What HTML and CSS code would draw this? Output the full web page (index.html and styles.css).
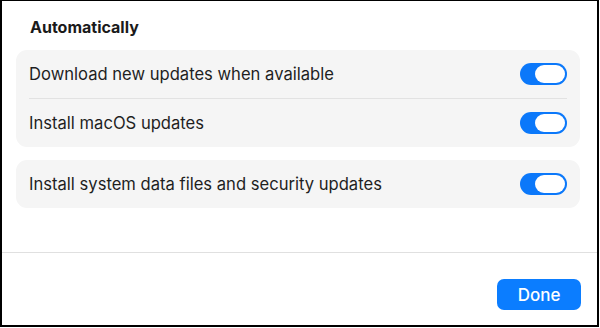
FILE: index.html
```html
<!DOCTYPE html>
<html lang="en">
<head>
<meta charset="utf-8">
<title>Automatic Updates</title>
<link rel="stylesheet" href="styles.css">
</head>
<body>
<div class="window">
  <div class="content">
    <h2 class="heading">Automatically</h2>
    <div class="card">
      <div class="row">
        <span class="label">Download new updates when available</span>
        <span class="toggle"><span class="knob"></span></span>
      </div>
      <div class="sep"></div>
      <div class="row">
        <span class="label">Install macOS updates</span>
        <span class="toggle"><span class="knob"></span></span>
      </div>
    </div>
    <div class="card">
      <div class="row">
        <span class="label">Install system data files and security updates</span>
        <span class="toggle"><span class="knob"></span></span>
      </div>
    </div>
  </div>
  <div class="footer">
    <button class="btn-done" type="button">Done</button>
  </div>
</div>
</body>
</html>
```
FILE: styles.css
```css
html, body {
  margin: 0;
  padding: 0;
  background: #ffffff;
}
body {
  font-family: Inter, "Noto Sans", "Liberation Sans", sans-serif;
  color: #1f1f1f;
}
.window {
  width: 599px;
  height: 327px;
  box-sizing: border-box;
  border-style: solid;
  border-color: #000;
  border-width: 1px 2px 2px 2px;
  display: flex;
  flex-direction: column;
  background: #fff;
}
.content {
  flex: 1;
  padding: 16px 17px 0 14px;
}
.heading {
  margin: 0 0 13px 14px;
  font-size: 16px;
  line-height: 20px;
  font-weight: 650;
  color: #1a1a1a;
}
.card {
  background: #f5f5f5;
  border-radius: 11px;
  padding: 0 13px;
  margin-bottom: 13px;
}
.row {
  height: 48px;
  display: flex;
  align-items: center;
  justify-content: space-between;
}
.label {
  font-size: 16.6px;
  line-height: 20px;
  color: #1f1f1f;
}
.sep {
  height: 1px;
  background: #e2e2e2;
}
.toggle {
  width: 47px;
  height: 22px;
  box-sizing: border-box;
  border-radius: 11px;
  background: #0b78fa;
  display: flex;
  justify-content: flex-end;
  align-items: center;
  padding: 2px;
}
.knob {
  width: 30px;
  height: 18px;
  border-radius: 9px;
  background: #ffffff;
}
.footer {
  height: 73px;
  box-sizing: border-box;
  border-top: 1px solid #e0e0e0;
  display: flex;
  justify-content: flex-end;
  align-items: flex-start;
  padding: 26px 16px 0 0;
}
.btn-done {
  width: 84px;
  height: 31px;
  border: none;
  border-radius: 7px;
  background: #0b7dff;
  color: #ffffff;
  font-family: Inter, "Noto Sans", "Liberation Sans", sans-serif;
  font-size: 17px;
  font-weight: 500;
  padding: 0;
}
```
